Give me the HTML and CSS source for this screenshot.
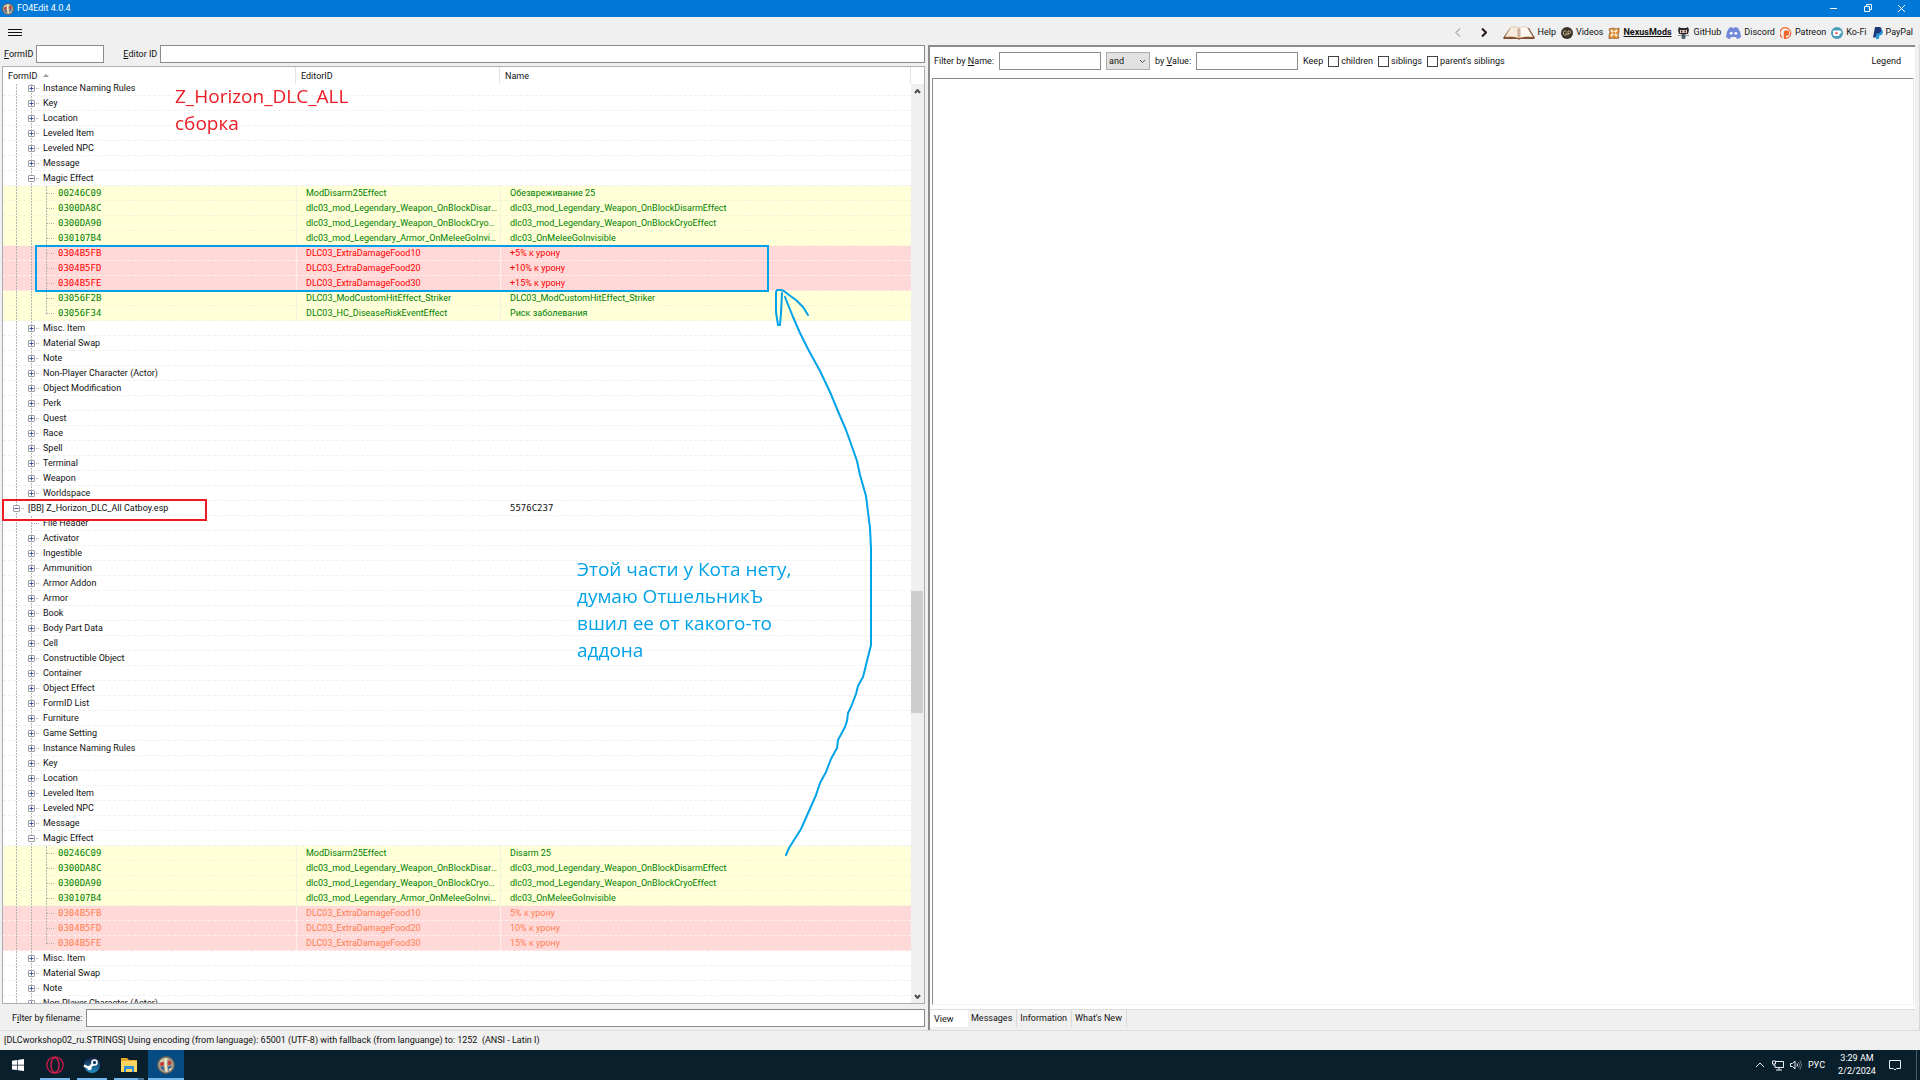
FILE: index.html
```html
<!DOCTYPE html>
<html lang="en">
<head>
    <meta charset="UTF-8">
    <meta name="viewport" content="width=device-width, initial-scale=1.0">
    <title>FO4Edit 4.0.4</title>
    <link rel="stylesheet" href="styles.css">
</head>
<body>
    <!-- Shared logo -->
    <svg class="defs" width="0" height="0" aria-hidden="true">
        <symbol id="xedit" viewBox="0 0 16 16">
            <circle cx="8" cy="8" r="7.500" fill="#a09c8c" stroke="#5b5a52"/>
            <path d="M3 4l3-2v3L3 6z" fill="#d8cfae"/>
            <path d="M3 6l3-1v3L3 9z" fill="#c9312c"/>
            <path d="M10 4l3 1-1 3-2 0z" fill="#c9312c"/>
            <path d="M10 9h3l-1 3-2 1z" fill="#2e5a94"/>
            <path d="M3 10l3-1v4z" fill="#2e5a94"/>
            <path d="M6.500 2h3l-1 4 1 8h-2l-1-7z" fill="#f3e7c2"/>
            <path d="M10 12l3-2-1 3z" fill="#e9dfc0"/>
        </symbol>
    </svg>

    <!-- Title bar -->
    <header class="titlebar">
        <svg class="app-icon"><use href="#xedit"/></svg>
        <h1>FO4Edit 4.0.4</h1>
        <div class="window-buttons">
            <button aria-label="Minimize"><svg viewBox="0 0 9 9"><path d="M1 4.500h7"/></svg></button>
            <button aria-label="Restore"><svg viewBox="0 0 9 9"><path d="M1.500 2.500h5v5h-5zM3.500 2.500v-2h5v5h-2"/></svg></button>
            <button aria-label="Close"><svg viewBox="0 0 9 9"><path d="M1 1l7 7M8 1l-7 7"/></svg></button>
        </div>
    </header>

    <!-- Toolbar -->
    <nav class="toolbar">
        <button class="menu" aria-label="Menu"><svg viewBox="0 0 14 9"><path d="M0 1.500h14M0 4.500h14M0 7.500h14"/></svg></button>
        <div class="history">
            <button class="back" aria-label="Back"><svg viewBox="0 0 6 9"><path d="M5 0.500L1 4.500l4 4"/></svg></button>
            <button aria-label="Forward"><svg viewBox="0 0 6 9"><path d="M1 0.500l4 4-4 4"/></svg></button>
        </div>
        <a href="#help">
            <svg class="book" viewBox="0 0 32 14">
                <path d="M0 12L7 2h19l6 10-1 1H17l-1 1-1-1H1z" fill="#7d4a2b"/>
                <path d="M2 11L8 1q5-1 8 1v10q-6-2-14-1z" fill="#f7ecdc" stroke="#c9a98c" stroke-width="0.5"/>
                <path d="M30 11L24 1q-5-1-8 1v10q6-2 14-1z" fill="#fdf8f0" stroke="#c9a98c" stroke-width="0.5"/>
                <path d="M14.500 3v8l1.500 1 1.500-1V3L16 2z" fill="#cbb19a"/>
            </svg>
            Help
        </a>
        <a href="#videos">
            <svg class="icon" viewBox="0 0 12 12"><circle cx="6" cy="6" r="6" fill="#39332c"/><path d="M5.500 4H3.500Q2.500 4 2.500 5v2q0 1 1 1h2V6.200H4.500M7 8.500V4h1.500q1.300 0 1.300 1.200T8.500 6.500H7" fill="none" stroke="#c4ad7c"/></svg>
            Videos
        </a>
        <a href="#nexus" class="nexus">
            <svg class="icon" viewBox="0 0 12 12"><path d="M1 2l4-1 3 1 3-1v4l-1 3 1 3-4 1-3-1-3 1V8l1-3z" fill="#e0913a" stroke="#8a5a2a" stroke-width="0.7"/><path d="M3 3l6 6M9 3L3 9" stroke="#fff4dd" stroke-width="2"/><circle cx="6" cy="6" r="1.500" fill="#e0913a"/></svg>
            NexusMods
        </a>
        <a href="#github">
            <svg class="icon octocat" viewBox="0 0 14 12"><path d="M2 0l2 1h5l2-1 1 3-1 4H2L1 3z" fill="#2b2b33"/><path d="M3 3h7v3H3z" fill="#f0c9b4"/><path d="M4 3.500h1.500v2H4zM7.500 3.500H9v2H7.500z" fill="#3b2a2a"/><path d="M4.500 7h4v4l-1 1h-2l-1-1z" fill="#4a5a66"/><path d="M1 8.500h3.500M12 8.500H8.500" stroke="#8a9098"/></svg>
            GitHub
        </a>
        <a href="#discord">
            <svg class="icon discord" viewBox="0 0 15 12"><path d="M3 1Q5 0 6 0l.5 1h2L9 0q1 0 3 1 3 4 3 9-2 2-4 2l-1-2H5l-1 2q-2 0-4-2 0-5 3-9z" fill="#7289da"/><circle cx="5.200" cy="6.300" r="1.400" fill="#fff"/><circle cx="9.800" cy="6.300" r="1.400" fill="#fff"/></svg>
            Discord
        </a>
        <a href="#patreon">
            <svg class="icon" viewBox="0 0 12 12"><path d="M2.200 10.500A5.400 5.400 0 1 1 6 11.400" fill="none" stroke="#f4662a" stroke-width="1.200"/><path d="M3.800 12V6a2.700 2.700 0 1 1 2.700 2.700H6V12z" fill="#f4662a"/></svg>
            Patreon
        </a>
        <a href="#kofi">
            <svg class="icon" viewBox="0 0 12 12"><circle cx="6" cy="6" r="6" fill="#4b9cb8"/><path d="M2 3.500h7q1.500 0 1.500 1.500T9 6.500q-.5 2.500-2 2.500H3.500Q2 9 2 7z" fill="#fff"/><path d="M5.500 7.500L4 6q0-1.300 1.500-.6Q7 4.700 7 6z" fill="#e8404a"/></svg>
            Ko-Fi
        </a>
        <a href="#paypal">
            <svg class="icon paypal" viewBox="0 0 11 12"><path d="M4 2.500h5q2.500 1 1.800 3.500T7.500 8.500l-.8 3.500H4z" fill="#2997d8"/><path d="M3 0h4q3 0 2.500 3T6 6.500H4.500l-.8 4H1z" fill="#1f3a7a"/></svg>
            PayPal
        </a>
    </nav>

    <!-- Panes -->
    <main class="panes">
        <section class="left-pane">
            <div class="id-bar">
                <label for="form-id"><u>F</u>ormID</label>
                <input type="text" id="form-id">
                <label for="editor-id" class="editor-label"><u>E</u>ditor ID</label>
                <input type="text" id="editor-id">
            </div>

            <div class="tree">
                <div class="tree-view" id="tree-view">
                    <table>
                        <colgroup>
                            <col class="col-form">
                            <col class="col-editor">
                            <col>
                        </colgroup>
                        <thead>
                            <tr>
                                <th>FormID <span class="sort-arrow"></span></th>
                                <th>EditorID</th>
                                <th>Name</th>
                            </tr>
                        </thead>
                        <tbody id="tree-rows"></tbody>
                    </table>
                </div>
                <div class="scrollbar">
                    <button aria-label="Scroll up"><svg viewBox="0 0 7 5"><path d="M1 4l2.500-3L6 4"/></svg></button>
                    <div class="track"><div class="thumb"></div></div>
                    <button aria-label="Scroll down"><svg viewBox="0 0 7 5"><path d="M1 1l2.500 3L6 1"/></svg></button>
                </div>

                <!-- Notes over the tree -->
                <p class="note note-red">Z_Horizon_DLC_ALL<br>сборка</p>
                <p class="note note-blue">Этой части у Кота нету,<br>думаю ОтшельникЪ<br>вшил ее от какого-то<br>аддона</p>
                <div class="frame frame-blue"></div>
                <div class="frame frame-red"></div>
                <svg class="arrow" viewBox="770 285 106 576">
                    <path d="M785 855l3-7 12-19 4-9 8-18 3-7 4-12 6-11 5-13 6-11 1-8 7-13 2-6 1-8 3-6 5-13 2-8 5-9 3-12 5-20v-97l-1-20-2-16-2-16-6-21-3-14-7-20-4-11-6-14-10-24-10-21-12-22-8-16-7-16-8-20"/>
                    <path d="M807 315l-5-8-7-7-7-5-5-4-3-1h-4l-1 2v20l2 13h2l1-12 1-20"/>
                </svg>
            </div>

            <div class="file-bar">
                <label for="file-filter">F<u>i</u>lter by filename:</label>
                <input type="text" id="file-filter">
            </div>
        </section>

        <section class="right-pane">
            <div class="view">
                <div class="filter-bar">
                    <label for="filter-name">Filter by <u>N</u>ame:</label>
                    <input type="text" id="filter-name">
                    <select aria-label="Operator">
                        <option>and</option>
                        <option>or</option>
                    </select>
                    <label for="filter-value">by <u>V</u>alue:</label>
                    <input type="text" id="filter-value">
                    <span class="keep">Keep</span>
                    <label class="check"><input type="checkbox">children</label>
                    <label class="check"><input type="checkbox">siblings</label>
                    <label class="check"><input type="checkbox">parent's siblings</label>
                    <button class="legend">Legend</button>
                </div>
                <div class="record-view"></div>
            </div>
            <div class="tabs">
                <button class="active">View</button>
                <button>Messages</button>
                <button>Information</button>
                <button>What's New</button>
            </div>
        </section>
    </main>

    <!-- Status bar -->
    <div class="status">[DLCworkshop02_ru.STRINGS] Using encoding (from language): 65001 (UTF-8) with fallback (from languange) to: 1252 &nbsp;(ANSI - Latin I)</div>

    <!-- Taskbar -->
    <footer class="taskbar">
        <button aria-label="Start">
            <svg viewBox="0 0 18 18"><path d="M3 4.700l5-.7v4.700H3zM8.700 3.900L15 3v5.700H8.700zM3 9.400h5v4.700l-5-.7zM8.700 9.400H15V15l-6.300-.8z" fill="#fff"/></svg>
        </button>
        <button class="open" aria-label="Opera">
            <svg viewBox="0 0 18 18"><circle cx="9" cy="9" r="8.200" fill="none" stroke="#c9184a" stroke-width="1.300"/><ellipse cx="9" cy="9" rx="4" ry="7.500" fill="none" stroke="#e01f50" stroke-width="1.300"/></svg>
        </button>
        <button class="open" aria-label="Steam">
            <svg viewBox="0 0 18 18"><defs><linearGradient id="steam" x2="0" y2="1"><stop offset="0" stop-color="#14193c"/><stop offset="1" stop-color="#1f8ec4"/></linearGradient></defs><circle cx="9" cy="9" r="8" fill="url(#steam)"/><path d="M1 9.500l5 2.500 4-4" stroke="#fff" stroke-width="2.500" fill="none"/><circle cx="11.500" cy="6.500" r="3.300" fill="#fff"/><circle cx="11.500" cy="6.500" r="1.700" fill="#14406a"/><circle cx="6.500" cy="12" r="2.200" fill="#fff"/></svg>
        </button>
        <button class="open stacked" aria-label="File Explorer">
            <svg viewBox="0 0 18 18"><path d="M1 2h6l2 2h8v12H1z" fill="#e8a92f"/><path d="M1 5h16v11H1z" fill="#fcd462"/><path d="M4 10h10v6h-2v-3H6v3H4z" fill="#2f8fd8"/></svg>
        </button>
        <button class="open current" aria-label="FO4Edit">
            <svg><use href="#xedit"/></svg>
        </button>
        <div class="tray">
            <button aria-label="Hidden icons"><svg viewBox="0 0 12 12"><path d="M2 8l4-4 4 4"/></svg></button>
            <button aria-label="Network"><svg viewBox="0 0 12 12"><path d="M4 2.500h7.500v6H3V6M7 8.500V11M4 11h6M0.500 2h3v3h-3zM2 5v2"/></svg></button>
            <button aria-label="Volume"><svg viewBox="0 0 12 12"><path d="M0.500 4.500H2.500L5 2v8L2.500 7.500H0.500zM7 4.500q1 1.500 0 3"/><path class="dim" d="M8.500 3q2 3 0 6M10 1.500q3 4.500 0 9"/></svg></button>
            <button class="lang">РУС</button>
            <time class="clock" datetime="2024-02-02T03:29">3:29 AM<br>2/2/2024</time>
            <button class="notify" aria-label="Notifications"><svg viewBox="0 0 12 12"><path d="M0.500 1.500h11v8H7.500L6 11 4.500 9.500h-4z"/></svg></button>
        </div>
    </footer>

    <script src="tree.js"></script>
</body>
</html>
```
FILE: styles.css
```css
* {
    margin: 0;
    padding: 0;
    box-sizing: border-box;
}

body {
    display: flex;
    flex-direction: column;
    height: 100vh;
    overflow: hidden;
    background: #f0f0f0;
    color: #111;
    font: 9px/15px Roboto, "Noto Sans", sans-serif;
}

button,
input,
select {
    font: inherit;
    color: inherit;
}

button {
    background: none;
    border: none;
}

input[type="text"] {
    min-width: 0;
    height: 18px;
    padding: 0 3px;
    background: #fff;
    border: 1px solid #8c8c8c;
}

svg {
    display: block;
    flex: none;
}

.defs {
    position: absolute;
}

/* Title bar */
.titlebar {
    display: flex;
    align-items: center;
    height: 17px;
    padding-left: 2px;
    background: #0078d7;
    color: #fff;
}

.titlebar h1 {
    flex: 1;
    font-size: 9px;
    font-weight: 400;
}

.app-icon {
    width: 12px;
    height: 12px;
    margin-right: 3px;
}

.window-buttons {
    display: flex;
    padding-right: 2px;
}

.window-buttons button {
    display: flex;
    justify-content: center;
    align-items: center;
    width: 34px;
    height: 17px;
}

.window-buttons svg {
    width: 9px;
    height: 9px;
    fill: none;
    stroke: #fff;
}

/* Toolbar */
.toolbar {
    display: flex;
    align-items: center;
    gap: 5px;
    height: 28px;
    padding: 3px 7px 0 8px;
}

.toolbar a {
    display: flex;
    align-items: center;
    gap: 3px;
    color: #111;
    text-decoration: none;
}

.toolbar .nexus {
    font-weight: 700;
    text-decoration: underline;
}

.menu svg {
    width: 14px;
    height: 9px;
    stroke: #111;
}

.history {
    display: flex;
    gap: 20px;
    margin-left: auto;
    margin-right: 11px;
}

.history svg {
    width: 6px;
    height: 9px;
    fill: none;
    stroke: #22141f;
    stroke-width: 2;
}

.history .back svg {
    stroke: #85787f;
    stroke-width: 1;
}

.book {
    width: 32px;
    height: 14px;
}

.icon {
    width: 12px;
    height: 12px;
}

.discord {
    width: 15px;
}

.octocat {
    width: 14px;
}

.paypal {
    width: 11px;
}

/* Panes */
.panes {
    flex: 1;
    display: grid;
    grid-template-columns: 29fr 31fr;
    min-height: 0;
}

.left-pane {
    display: flex;
    flex-direction: column;
    min-width: 0;
    min-height: 0;
    padding: 0 3px 3px 2px;
}

.id-bar,
.file-bar {
    display: flex;
    align-items: center;
    gap: 3px;
}

.id-bar {
    padding-left: 2px;
}

#form-id {
    width: 68px;
}

.editor-label {
    margin-left: 16px;
}

#editor-id,
#file-filter {
    flex: 1;
}

.file-bar {
    padding-left: 10px;
}

/* Tree */
.tree {
    position: relative;
    flex: 1;
    display: flex;
    min-height: 0;
    margin: 3px 0 5px;
    border: 1px solid #a9adb5;
    background: #fff;
}

.tree-view {
    flex: 1;
    min-width: 0;
    overflow: hidden;
}

.tree table {
    width: 100%;
    table-layout: fixed;
    border-collapse: separate;
    border-spacing: 0;
}

.col-form {
    width: 293px;
}

.col-editor {
    width: 204px;
}

.tree th {
    position: sticky;
    top: 0;
    z-index: 1;
    height: 17px;
    padding: 2px 0 0 5px;
    background: #fff;
    border-right: 1px solid #e3e3e3;
    font-weight: 400;
    text-align: left;
}

.sort-arrow {
    display: inline-block;
    margin: 0 0 2px 3px;
    border: 3px solid transparent;
    border-top: 0;
    border-bottom-color: #9a9a9a;
}

.tree td {
    height: 15px;
    padding: 0 1px 0 9px;
    border-bottom: 1px dashed #f0f0f0;
    line-height: 14px;
    white-space: nowrap;
    overflow: hidden;
    text-overflow: ellipsis;
}

.tree td:first-child {
    padding: 0 0 0 6px;
}

.tree td + td {
    border-left: 1px solid transparent;
}

.tree .override td {
    background: #ffffd8;
    border-color: #f3f3dc;
    color: #008000;
}

.tree .conflict td,
.tree .loser td {
    background: #ffd8d8;
    border-color: #fff0f0;
    color: #ff0000;
}

.tree .loser td {
    color: #ff7f50;
}

.mono {
    font-family: "DejaVu Sans Mono", monospace;
}

.node {
    display: flex;
    height: 14px;
}

.node .label {
    padding-left: 4px;
}

/* dotted tree lines, one 15px step per level */
.guide {
    display: flex;
    align-items: center;
    width: 15px;
    height: 15px;
    background: repeating-linear-gradient(#b4b4b4 0 2px, transparent 2px 3px) 7px 0 / 1px 15px no-repeat;
}

.guide.last {
    background-size: 1px 7px;
}

.guide.branch::after {
    content: "";
    width: 8px;
    margin-left: auto;
    border-top: 1px dotted #b4b4b4;
}

.guide.has-button::after {
    width: 3px;
}

.expander {
    display: flex;
    justify-content: center;
    align-items: center;
    width: 7px;
    height: 7px;
    margin-left: 4px;
    background: #fff;
    border: 1px solid #a0a0a0;
    border-radius: 1px;
}

.expander svg {
    width: 5px;
    height: 5px;
    stroke: #3b57a0;
}

/* Scrollbar */
.scrollbar {
    display: flex;
    flex-direction: column;
    width: 13px;
    margin-top: 17px;
    background: #f0f0f0;
}

.scrollbar button {
    display: flex;
    justify-content: center;
    align-items: center;
    width: 12px;
    height: 14px;
}

.scrollbar svg {
    width: 7px;
    height: 5px;
    fill: none;
    stroke: #505050;
    stroke-width: 2;
}

.track {
    flex: 1;
    display: flex;
    flex-direction: column;
}

.track::before {
    content: "";
    flex: 493;
}

.track::after {
    content: "";
    flex: 276;
}

.thumb {
    flex: 122;
    width: 12px;
    background: #cdcdcd;
}

/* Notes over the tree */
.note {
    position: absolute;
    z-index: 2;
    font-family: "Open Sans", "Noto Sans", sans-serif;
    font-size: 19px;
    line-height: 27px;
    white-space: nowrap;
}

.note-red {
    top: 16px;
    left: 172px;
    color: #ed1c24;
}

.note-blue {
    top: 489px;
    left: 574px;
    color: #00a2e8;
}

.frame {
    position: absolute;
    z-index: 2;
    border: 2px solid;
}

.frame-blue {
    top: 178px;
    left: 32px;
    width: 734px;
    height: 47px;
    color: #00a2e8;
}

.frame-red {
    top: 432px;
    left: -1px;
    width: 205px;
    height: 22px;
    color: #ed1c24;
}

.arrow {
    position: absolute;
    top: 218px;
    left: 768px;
    z-index: 2;
    width: 106px;
    height: 576px;
    fill: none;
    stroke: #00a2e8;
    stroke-width: 2;
    stroke-linejoin: round;
    stroke-linecap: round;
}

/* Right pane */
.right-pane {
    display: flex;
    flex-direction: column;
    min-width: 0;
    padding: 0 4px 3px 0;
    border-left: 2px solid #8c8c8c;
    border-right: 1px solid #d8d8d8;
}

.view {
    flex: 1;
    display: flex;
    flex-direction: column;
    padding: 5px 1px 4px 2px;
    background: #fff;
    border-top: 2px solid #8c8c8c;
    border-bottom: 1px solid #dcdcdc;
}

.filter-bar {
    display: flex;
    align-items: center;
    gap: 5px;
    margin-bottom: 8px;
    padding-left: 2px;
}

.filter-bar input[type="text"] {
    width: 102px;
}

.filter-bar select {
    width: 44px;
    height: 18px;
    padding-left: 2px;
    appearance: none;
    background: #e1e1e1 url("data:image/svg+xml,%3Csvg xmlns='http://www.w3.org/2000/svg' width='7' height='5'%3E%3Cpath d='M1 1l2.500 2.500L6 1' fill='none' stroke='%23555'/%3E%3C/svg%3E") no-repeat right 3px center;
    border: 1px solid #adadad;
    border-radius: 0;
}

.check {
    display: flex;
    align-items: center;
    gap: 2px;
}

.check input {
    width: 11px;
    height: 11px;
    appearance: none;
    background: #fff;
    border: 1px solid #444;
}

.legend {
    margin-left: auto;
    margin-right: 13px;
}

.record-view {
    flex: 1;
    border: 1px solid #8c8c8c;
    border-right-color: #e8e8e8;
    border-bottom-color: #f4f4f4;
}

.tabs {
    display: flex;
    height: 17px;
}

.tabs button {
    padding: 0 4px 0 3px;
    border-right: 1px solid #d9d9d9;
}

.tabs .active {
    width: 38px;
    padding: 2px 4px 0;
    background: #fff;
    border-right: 0;
    text-align: left;
}

/* Status bar */
.status {
    height: 20px;
    padding: 2px 4px 0;
    border-top: 1px solid #dcdcdc;
    white-space: nowrap;
}

/* Taskbar */
.taskbar {
    display: flex;
    gap: 1px;
    height: 30px;
    background: #0a1f2c;
    color: #fff;
}

.taskbar > button {
    display: flex;
    justify-content: center;
    align-items: center;
    width: 36px;
}

.taskbar > button svg {
    width: 18px;
    height: 18px;
}

.taskbar .open {
    background: linear-gradient(#76b9ed, #76b9ed) center bottom / 30px 2px no-repeat;
}

.taskbar .stacked {
    background-image: linear-gradient(90deg, #76b9ed 80%, #4a7799 80%);
}

.taskbar .current {
    background-color: #064b83;
    background-size: 100% 2px;
}

.tray {
    display: flex;
    align-items: center;
    gap: 6px;
    margin-left: auto;
    margin-right: 3px;
    padding-right: 15px;
    border-right: 1px solid #4e5b64;
}

.tray svg {
    width: 12px;
    height: 12px;
    fill: none;
    stroke: #e8eef2;
}

.tray .dim {
    stroke: #6b7b85;
}

.clock {
    width: 52px;
    line-height: 13px;
    text-align: center;
}
```
FILE: tree.js
```js
// Record groups of the two files, in tree order
const children = [
    ['override', '00246C09', 'ModDisarm25Effect', 'Обезвреживание 25'],
    ['override', '0300DA8C', 'dlc03_mod_Legendary_Weapon_OnBlockDisarmEffect', 'dlc03_mod_Legendary_Weapon_OnBlockDisarmEffect'],
    ['override', '0300DA90', 'dlc03_mod_Legendary_Weapon_OnBlockCryoEffect', 'dlc03_mod_Legendary_Weapon_OnBlockCryoEffect'],
    ['override', '030107B4', 'dlc03_mod_Legendary_Armor_OnMeleeGoInvisible', 'dlc03_OnMeleeGoInvisible'],
    ['conflict', '0304B5FB', 'DLC03_ExtraDamageFood10', '+5% к урону'],
    ['conflict', '0304B5FD', 'DLC03_ExtraDamageFood20', '+10% к урону'],
    ['conflict', '0304B5FE', 'DLC03_ExtraDamageFood30', '+15% к урону'],
    ['override', '03056F2B', 'DLC03_ModCustomHitEffect_Striker', 'DLC03_ModCustomHitEffect_Striker'],
    ['override', '03056F34', 'DLC03_HC_DiseaseRiskEventEffect', 'Риск заболевания']
];

const catboyChildren = [
    ['override', '00246C09', 'ModDisarm25Effect', 'Disarm 25'],
    children[1],
    children[2],
    children[3],
    ['loser', '0304B5FB', 'DLC03_ExtraDamageFood10', '5% к урону'],
    ['loser', '0304B5FD', 'DLC03_ExtraDamageFood20', '10% к урону'],
    ['loser', '0304B5FE', 'DLC03_ExtraDamageFood30', '15% к урону']
];

const tbody = document.getElementById('tree-rows');

function button(open) {
    const d = open ? 'M0.5 2.500h4' : 'M0.5 2.500h4M2.500 0.500v4';
    return `<button class="expander" aria-label="${open ? 'Collapse' : 'Expand'}"><svg viewBox="0 0 5 5"><path d="${d}"/></svg></button>`;
}

function addRow(cls, guides, label, editorId, name, mono) {
    tbody.insertAdjacentHTML('beforeend', `<tr class="${cls}">
        <td><div class="node">${guides}<span class="label${mono ? ' mono' : ''}">${label}</span></div></td>
        <td>${editorId}</td>
        <td${cls === 'file' ? ' class="mono"' : ''}>${name}</td>
    </tr>`);
}

function addGroups(names) {
    names.forEach(name => {
        const last = name === 'Worldspace' ? ' last' : '';
        const open = name === 'Magic Effect';
        const node = name === 'File Header'
            ? '<span class="guide branch"></span>'
            : `<span class="guide branch has-button${last}">${button(open)}</span>`;
        addRow('group', '<span class="guide"></span>' + node, name, '', '');
    });
}

function addRecords(records) {
    records.forEach(([cls, id, editorId, name], i) => {
        const last = i === records.length - 1 ? ' last' : '';
        addRow(cls, `<span class="guide"></span><span class="guide"></span><span class="guide branch${last}"></span>`, id, editorId, name, true);
    });
}

addGroups(['Instance Naming Rules', 'Key', 'Location', 'Leveled Item', 'Leveled NPC', 'Message', 'Magic Effect']);
addRecords(children);
addGroups(['Misc. Item', 'Material Swap', 'Note', 'Non-Player Character (Actor)', 'Object Modification', 'Perk',
    'Quest', 'Race', 'Spell', 'Terminal', 'Weapon', 'Worldspace']);
addRow('file', `<span class="guide branch has-button">${button(true)}</span>`, '[BB] Z_Horizon_DLC_All Catboy.esp', '', '5576C237');
addGroups(['File Header', 'Activator', 'Ingestible', 'Ammunition', 'Armor Addon', 'Armor', 'Book', 'Body Part Data', 'Cell',
    'Constructible Object', 'Container', 'Object Effect', 'FormID List', 'Furniture', 'Game Setting',
    'Instance Naming Rules', 'Key', 'Location', 'Leveled Item', 'Leveled NPC', 'Message', 'Magic Effect']);
addRecords(catboyChildren);
addGroups(['Misc. Item', 'Material Swap', 'Note', 'Non-Player Character (Actor)']);

// the first row is partly scrolled under the header
document.getElementById('tree-view').scrollTop = 3;
```
